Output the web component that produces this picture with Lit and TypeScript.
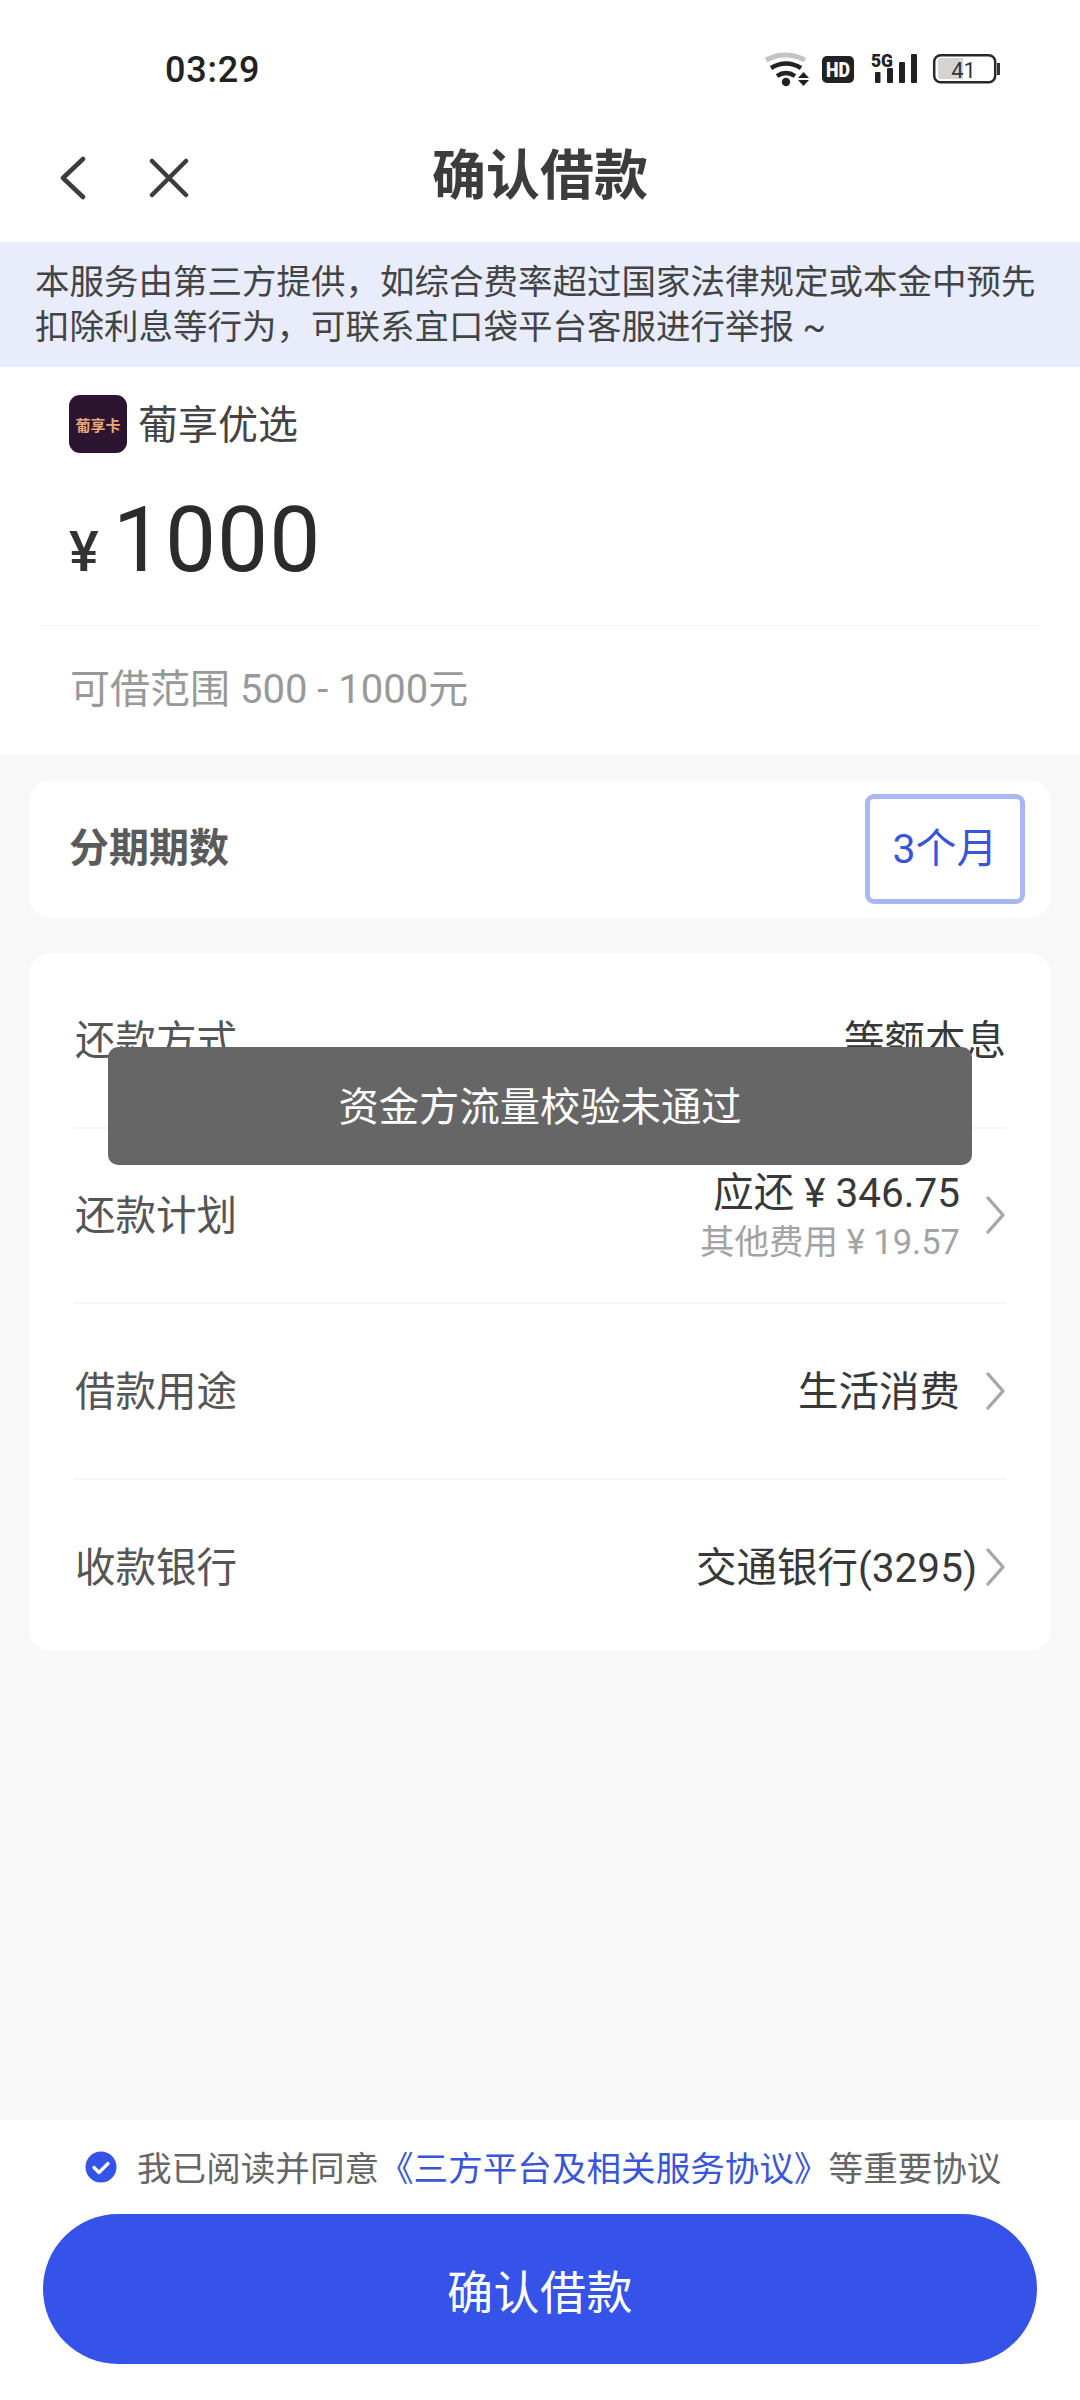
import { LitElement, html, css, svg } from 'lit';
import { customElement } from 'lit/decorators.js';

type Row = {
  label: string
  value: string
  sub?: string
  arrow?: boolean
  wide?: boolean
}

const rows: Row[] = [
  { label: '还款方式', value: '等额本息' },
  { label: '还款计划', value: '应还 ¥ 346.75', sub: '其他费用 ¥ 19.57', arrow: true },
  { label: '借款用途', value: '生活消费', arrow: true },
  { label: '收款银行', value: '交通银行(3295)', arrow: true, wide: true },
];

const chevron = svg`<path d="M3 3l15 17L3 37" fill="none" stroke="#a6a6a6" stroke-width="3.4" stroke-linecap="round" stroke-linejoin="round"/>`;

@customElement('app-root')
export class AppRoot extends LitElement {
  static styles = css`
    :host {
      display: block;
      width: 1080px;
      height: 2400px;
      background: #f8f8f8;
      font-family: "Roboto", "Noto Sans CJK SC", sans-serif;
      color: #333;
      position: relative;
      overflow: hidden;
    }
    * { box-sizing: border-box; }

    .page { display: flex; flex-direction: column; height: 2400px; }

    .status {
      height: 120px;
      background: #fff;
      display: flex;
      align-items: center;
      justify-content: space-between;
      padding: 20px 79px 0 165px;
      flex: none;
    }
    .time { font-size: 36px; font-weight: 500; color: #222; letter-spacing: 0.8px; }
    .status-icons { display: block; }
    .status-icons text { font-family: "Roboto", sans-serif; }

    .nav {
      height: 122px;
      background: #fff;
      flex: none;
      display: flex;
      align-items: center;
      padding: 0 0 6px 60px;
      position: relative;
    }
    .nav svg { display: block; }
    .nav .close { margin-left: 63px; }
    .title {
      position: absolute;
      left: 0;
      right: 0;
      top: 22px;
      text-align: center;
      font-size: 54px;
      line-height: 70px;
      font-weight: 700;
      color: #3c3c3c;
    }

    .notice {
      background: #e9edfb;
      height: 125px;
      padding: 18px 20px 0 35px;
      font-size: 34.5px;
      line-height: 45px;
      color: #444;
      flex: none;
      white-space: nowrap;
    }

    .top { background: #fff; height: 387px; flex: none; padding: 28px 40px 0; }
    .brand { display: flex; align-items: center; margin-left: 29px; height: 58px; }
    .logo {
      width: 58px;
      height: 58px;
      border-radius: 11px;
      background: #2b1530;
      display: flex;
      align-items: center;
      justify-content: center;
      color: #e8a878;
      font-size: 15px;
      font-weight: 700;
      white-space: nowrap;
    }
    .brand-name { margin: 0 0 5px 11px; font-size: 40px; color: #444; }
    .amount { display: flex; align-items: baseline; margin: 33px 0 0 29px; height: 108px; }
    .yen { font-size: 56px; color: #333; font-weight: 500; margin-right: 14px; }
    .num { font-size: 91px; color: #2b2b2b; line-height: 108px; letter-spacing: 1px; }
    .range {
      margin-top: 31px;
      border-top: 1px solid #f4f4f4;
      padding: 41px 0 0 30px;
      font-size: 40px;
      line-height: 46px;
      color: #999;
    }

    .card {
      background: #fff;
      border-radius: 22px;
      margin: 0 29px;
      flex: none;
    }
    .terms {
      margin-top: 26px;
      height: 138px;
      display: flex;
      align-items: center;
      justify-content: space-between;
      padding: 0 26px 0 40px;
    }
    .terms-label { font-size: 40px; font-weight: 700; color: #5a5a5a; padding-bottom: 8px; }
    .term {
      width: 160px;
      height: 110px;
      border: 5px solid #a9b7f3;
      border-radius: 9px;
      display: flex;
      align-items: center;
      justify-content: center;
      font-size: 41px;
      color: #3a55d9;
      padding-bottom: 8px;
    }

    .list { margin-top: 35px; height: 698px; padding-top: 0; }
    .row {
      height: 175.5px;
      margin: 0 45px 0 45px;
      padding-left: 1px;
      display: flex;
      align-items: center;
      justify-content: space-between;
      border-bottom: 2px solid #f5f5f5;
    }
    .row:last-child { border-bottom: none; }
    .label { font-size: 40.5px; color: #555; padding-bottom: 5px; }
    .right { display: flex; align-items: center; }
    .values { text-align: right; padding-top: 2px; }
    .value { font-size: 40.5px; line-height: 48px; color: #383838; }
    .sub { font-size: 34.5px; line-height: 50px; color: #a3a3a3; margin-bottom: -3px; }
    .arrow { width: 21px; height: 40px; display: block; margin-left: 25px; }
    .wide .arrow { margin-left: 8px; }

    .spacer { flex: 1; }

    .foot { background: #fff; height: 280px; flex: none; padding-top: 0; }
    .agree {
      height: 94px;
      display: flex;
      align-items: center;
      padding-left: 85px;
      font-size: 34.6px;
      color: #666;
      white-space: nowrap;
    }
    .agree svg { margin-right: 20px; flex: none; }
    .agree span { padding-bottom: 2px; }
    .agree a { color: #3a55d9; }
    .submit {
      display: flex;
      align-items: center;
      justify-content: center;
      margin: 0 43px;
      height: 150px;
      border-radius: 75px;
      background: #3553e8;
      color: #fff;
      font-size: 46px;
      letter-spacing: 0.5px;
    }

    .toast {
      position: absolute;
      left: 108px;
      top: 1047px;
      width: 864px;
      height: 118px;
      border-radius: 10px;
      background: #666;
      color: #fff;
      font-size: 40.3px;
      padding-bottom: 6px;
      display: flex;
      align-items: center;
      justify-content: center;
    }
  `;

  statusIcons() {
    return html`<svg class="status-icons" width="238" height="40" viewBox="0 0 238 40">
      <path d="M3 10q19.500-10 39 0" fill="none" stroke="#c4c4c4" stroke-width="5"/>
      <path d="M8 18q15-9 30 0M14 26q9-6 18 0" fill="none" stroke="#222" stroke-width="4.500"/>
      <circle cx="23" cy="32" r="4.200" fill="#222"/>
      <path d="M35 28h11l-5.500-6zM35 30h11l-5.500 6z" fill="#222"/>
      <rect x="59" y="6" width="32" height="27" rx="5" fill="#222"/>
      <text x="75" y="27" text-anchor="middle" font-size="20" font-weight="900" fill="#fff" textLength="24" lengthAdjust="spacingAndGlyphs">HD</text>
      <text x="108" y="17" font-size="19" font-weight="900" fill="#222" textLength="22" lengthAdjust="spacingAndGlyphs">5G</text>
      <rect x="112" y="22" width="5.500" height="11" rx="1" fill="#222"/>
      <rect x="124" y="18" width="6" height="15" rx="1" fill="#222"/>
      <rect x="136" y="12" width="6" height="21" rx="1" fill="#222"/>
      <rect x="148" y="4" width="6" height="29" rx="1" fill="#222"/>
      <rect x="171.200" y="5.200" width="61" height="27" rx="6.500" fill="#fff" stroke="#2a2a2a" stroke-width="2.500"/>
      <path d="M178 8h22v21h-22a3 3 0 0 1-3-3v-15a3 3 0 0 1 3-3z" fill="#d4d4d4"/>
      <text x="200.500" y="27.500" text-anchor="middle" font-size="22" fill="#333">41</text>
      <rect x="234" y="13" width="3" height="12" fill="#333"/>
    </svg>`;
  }

  renderRow(r: Row) {
    return html`<div class="row ${r.wide ? 'wide' : ''}">
      <span class="label">${r.label}</span>
      <div class="right">
        <div class="values">
          <div class="value">${r.value}</div>
          ${r.sub ? html`<div class="sub">${r.sub}</div>` : ''}
        </div>
        ${r.arrow ? html`<svg class="arrow" viewBox="0 0 21 40">${chevron}</svg>` : ''}
      </div>
    </div>`;
  }

  render() {
    return html`
      <div class="page">
        <div class="status">
          <span class="time">03:29</span>
          ${this.statusIcons()}
        </div>
        <div class="nav">
          <svg width="26" height="44" viewBox="0 0 26 44"><path d="M23 3L3 22l20 19" fill="none" stroke="#3c3c3c" stroke-width="4.500" stroke-linecap="round" stroke-linejoin="round"/></svg>
          <svg class="close" width="40" height="40" viewBox="0 0 40 40"><path d="M3 3l34 34M37 3L3 37" fill="none" stroke="#3c3c3c" stroke-width="4.500" stroke-linecap="round"/></svg>
          <div class="title">确认借款</div>
        </div>
        <div class="notice">本服务由第三方提供，如综合费率超过国家法律规定或本金中预先<br>扣除利息等行为，可联系宜口袋平台客服进行举报 ~</div>
        <div class="top">
          <div class="brand">
            <div class="logo">葡享卡</div>
            <span class="brand-name">葡享优选</span>
          </div>
          <div class="amount"><span class="yen">¥</span><span class="num">1000</span></div>
          <div class="range">可借范围 500 - 1000元</div>
        </div>
        <div class="card terms">
          <span class="terms-label">分期期数</span>
          <div class="term">3个月</div>
        </div>
        <div class="card list">${rows.map(r => this.renderRow(r))}</div>
        <div class="spacer"></div>
        <div class="foot">
          <div class="agree">
            <svg width="32" height="32" viewBox="0 0 32 32"><circle cx="16" cy="16" r="15.500" fill="#3553e8"/><path d="M9 16.500l5 5 9-9" fill="none" stroke="#fff" stroke-width="3.200" stroke-linecap="round" stroke-linejoin="round"/></svg>
            <span>我已阅读并同意<a>《三方平台及相关服务协议》</a>等重要协议</span>
          </div>
          <div class="submit">确认借款</div>
        </div>
      </div>
      <div class="toast">资金方流量校验未通过</div>
    `;
  }
}
